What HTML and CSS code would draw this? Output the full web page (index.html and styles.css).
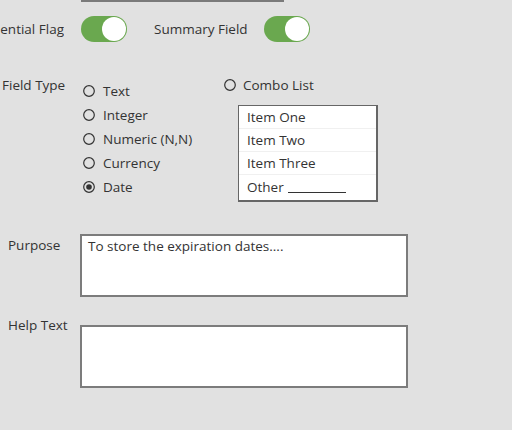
FILE: index.html
```html
<!DOCTYPE html>
<html>
<head>
<meta charset="utf-8">
<link rel="stylesheet" href="styles.css">
</head>
<body>
<div class="page">
  <div class="topfield"></div>
  <div class="toggles">
    <div class="clip-label"><span>Confidential Flag</span></div>
    <span class="toggle"><span class="knob"></span></span>
    <span class="lab-summary">Summary Field</span>
    <span class="toggle toggle-2"><span class="knob"></span></span>
  </div>
  <div class="fieldtype">
    <div class="ft-label">Field Type</div>
    <div class="options">
      <div class="opt"><svg class="radio" width="12" height="12" viewBox="0 0 12 12"><circle cx="6" cy="6" r="5.3" fill="none" stroke="#333" stroke-width="1.2"/></svg><span>Text</span></div>
      <div class="opt"><svg class="radio" width="12" height="12" viewBox="0 0 12 12"><circle cx="6" cy="6" r="5.3" fill="none" stroke="#333" stroke-width="1.2"/></svg><span>Integer</span></div>
      <div class="opt"><svg class="radio" width="12" height="12" viewBox="0 0 12 12"><circle cx="6" cy="6" r="5.3" fill="none" stroke="#333" stroke-width="1.2"/></svg><span>Numeric (N,N)</span></div>
      <div class="opt"><svg class="radio" width="12" height="12" viewBox="0 0 12 12"><circle cx="6" cy="6" r="5.3" fill="none" stroke="#333" stroke-width="1.2"/></svg><span>Currency</span></div>
      <div class="opt"><svg class="radio" width="12" height="12" viewBox="0 0 12 12"><circle cx="6" cy="6" r="5.3" fill="none" stroke="#333" stroke-width="1.2"/><circle cx="6" cy="6" r="2.8" fill="#333"/></svg><span>Date</span></div>
    </div>
    <div class="combo">
      <div class="opt combo-opt"><svg class="radio" width="12" height="12" viewBox="0 0 12 12"><circle cx="6" cy="6" r="5.3" fill="none" stroke="#333" stroke-width="1.2"/></svg><span>Combo List</span></div>
      <div class="listbox">
        <div class="item">Item One</div>
        <div class="item">Item Two</div>
        <div class="item">Item Three</div>
        <div class="item last">Other <span class="blank"></span></div>
      </div>
    </div>
  </div>
  <div class="area-row purpose">
    <div class="area-label">Purpose</div>
    <div class="area">To store the expiration dates....</div>
  </div>
  <div class="area-row help">
    <div class="area-label">Help Text</div>
    <div class="area area-empty"></div>
  </div>
</div>
</body>
</html>
```
FILE: styles.css
```css
html, body {
  margin: 0;
  padding: 0;
}
body {
  background: #e1e1e1;
  font-family: "Open Sans", "DejaVu Sans", sans-serif;
  font-size: 13.5px;
  color: #333;
  width: 512px;
  height: 430px;
  overflow: hidden;
}
.page {
  display: flex;
  flex-direction: column;
}
.topfield {
  margin-left: 81px;
  width: 203px;
  height: 2px;
  background: #7a7a7a;
}
.toggles {
  margin-top: 14px;
  height: 26px;
  display: flex;
  align-items: center;
}
.clip-label {
  width: 64px;
  display: flex;
  justify-content: flex-end;
  white-space: nowrap;
  margin-right: 17px;
  overflow: hidden;
}
.toggle {
  width: 46px;
  height: 26px;
  border-radius: 13px;
  background: #6aa84f;
  display: flex;
  align-items: center;
  justify-content: flex-end;
  padding-right: 1px;
  box-sizing: border-box;
  flex: none;
}
.knob {
  width: 24px;
  height: 24px;
  border-radius: 50%;
  background: #fff;
}
.lab-summary {
  margin-left: 27px;
  width: 93px;
  white-space: nowrap;
}
.toggle-2 {
  margin-left: 17px;
}
.fieldtype {
  margin-top: 34px;
  display: flex;
  align-items: flex-start;
}
.ft-label {
  width: 83px;
  box-sizing: border-box;
  padding-left: 2px;
  line-height: 18px;
  white-space: nowrap;
}
.options {
  width: 141px;
  padding-top: 3px;
}
.opt {
  height: 24px;
  display: flex;
  align-items: center;
  white-space: nowrap;
}
.radio {
  margin-right: 8px;
  flex: none;
}
.combo {
  display: flex;
  flex-direction: column;
}
.combo-opt {
  height: 18px;
}
.combo-opt .radio {
  margin-right: 7px;
}
.listbox {
  margin-top: 11px;
  margin-left: 14px;
  width: 140px;
  height: 97px;
  box-sizing: border-box;
  background: #fff;
  border: 1px solid #666;
  border-right-width: 2px;
  border-bottom-width: 2px;
}
.item {
  height: 23px;
  padding-left: 8px;
  border-bottom: 1px solid #f0f0f0;
  box-sizing: border-box;
  display: flex;
  align-items: center;
}
.item.last {
  border-bottom: none;
}
.blank {
  display: inline-block;
  width: 58px;
  height: 1.5px;
  background: #333;
  margin-left: 4px;
  margin-top: 12px;
}
.area-row {
  display: flex;
  align-items: flex-start;
}
.purpose {
  margin-top: 32px;
}
.help {
  margin-top: 19px;
}
.area-label {
  width: 80px;
  box-sizing: border-box;
  padding-left: 8px;
  line-height: 18px;
  white-space: nowrap;
}
.purpose .area-label {
  margin-top: 2px;
}
.area {
  width: 328px;
  height: 63px;
  box-sizing: border-box;
  background: #fff;
  border: 2px solid #7c7c7c;
  padding: 1px 6px;
  line-height: 18px;
}
.help .area {
  margin-top: 9px;
}
```
